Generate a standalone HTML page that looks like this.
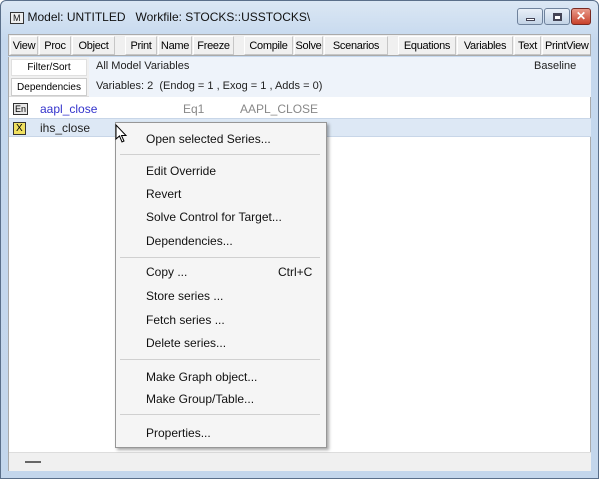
<!DOCTYPE html><html><head><style>
*{margin:0;padding:0;box-sizing:border-box}
body{width:599px;height:479px;overflow:hidden;background:#fff;font-family:"Liberation Sans",sans-serif;position:relative}
.win{position:absolute;left:0;top:0;width:599px;height:479px;background:linear-gradient(#dbe7f4,#c5d8ee 40px,#c3d6ec);border:1px solid #5a6f8a;border-radius:6px 6px 0 0}
.a{position:absolute}
.title{left:10px;top:10px;font-size:12px;color:#111}
.mi{display:inline-block;border:1px solid #333;font-size:9px;line-height:10px;padding:0 2px;background:#eee;margin-right:4px}
.tb{left:8px;top:34px;height:22px;width:583px;background:#f0f0f0;border:1px solid #aaa;font-size:11px;white-space:nowrap;overflow:hidden}
.tb span{position:absolute;top:1px;border:1px solid #c6c6c6;border-top-color:#fff;border-left-color:#fff;height:19px;line-height:18px;text-align:center;background:#f0f0f0;letter-spacing:-0.3px}
.client{left:8px;top:57px;width:583px;height:414px;background:#fff;border:1px solid #aaa}
.menu{left:115px;top:122px;width:212px;height:326px;background:#f5f5f5;border:1px solid #979797;box-shadow:2px 2px 3px rgba(0,0,0,.35);font-size:12px;color:#111}
.menu div{position:absolute;left:30px}
.sep{left:4px!important;width:200px;height:1px;background:#d0d0d0}
</style></head><body>
<div class="win"></div>
<div class="a title"><span class="mi">M</span>Model: UNTITLED &nbsp;&nbsp;Workfile: STOCKS::USSTOCKS\</div>
<div class="a" style="left:517px;top:8px;width:26px;height:17px;border:1px solid #6f829c;border-radius:3px;background:linear-gradient(#e9f0f8,#c3d3e6)"><div class="a" style="left:8px;top:9px;width:9px;height:3px;background:#fff;border:1px solid #445"></div></div>
<div class="a" style="left:544px;top:8px;width:26px;height:17px;border:1px solid #6f829c;border-radius:3px;background:linear-gradient(#e9f0f8,#c3d3e6)"><div class="a" style="left:8px;top:4px;width:9px;height:8px;border:2px solid #445;border-top-width:3px;background:#fff"></div></div>
<div class="a" style="left:571px;top:8px;width:20px;height:17px;border:1px solid #7a2a22;border-radius:3px;background:linear-gradient(#e99b8b,#c8412b);color:#fff;font-weight:bold;font-size:12px;text-align:center;line-height:15px">✕</div>
<div class="a tb">
<span style="left:1px;width:28px">View</span><span style="left:30px;width:32px">Proc</span><span style="left:63px;width:43px">Object</span>
<span style="left:116px;width:32px">Print</span><span style="left:149px;width:34px">Name</span><span style="left:184px;width:41px">Freeze</span>
<span style="left:235px;width:49px">Compile</span><span style="left:285px;width:29px">Solve</span><span style="left:315px;width:64px">Scenarios</span>
<span style="left:389px;width:58px">Equations</span><span style="left:448px;width:56px">Variables</span><span style="left:505px;width:27px">Text</span><span style="left:533px;width:56px;text-align:left;padding-left:2px">PrintView</span></div>
<div class="a client"></div>
<div class="a" style="left:9px;top:57px;width:582px;height:40px;background:#f0f0f0;border-bottom:1px solid #ddd"></div>
<div class="a" style="left:11px;top:59px;width:76px;height:17px;background:#fff;border:1px solid #e0e0e0;font-size:10px;text-align:center;line-height:16px">Filter/Sort</div>
<div class="a" style="left:11px;top:78px;width:76px;height:18px;background:#fff;border:1px solid #ccc;font-size:10px;text-align:center;line-height:18px">Dependencies</div>
<div class="a" style="left:89px;top:57px;width:502px;height:40px;background:#eef3fa"></div>
<div class="a" style="left:96px;top:60px;font-size:11px;color:#222">All Model Variables</div>
<div class="a" style="left:534px;top:60px;font-size:11px;color:#222">Baseline</div>
<div class="a" style="left:96px;top:80px;font-size:11px;color:#222">Variables: 2 &nbsp;(Endog = 1 , Exog = 1 , Adds = 0)</div>
<div class="a" style="left:9px;top:118px;width:582px;height:19px;background:#dde8f5;border-top:1px solid #c8d6e8;border-bottom:1px solid #c8d6e8"></div>
<div class="a" style="left:13px;top:103px;font-size:9px;border:1px solid #333;background:#e8e8e8;padding:0 1px;line-height:10px">En</div>
<div class="a" style="left:40px;top:102px;font-size:12px;color:#3333cc">aapl_close</div>
<div class="a" style="left:183px;top:102px;font-size:12px;color:#888">Eq1</div>
<div class="a" style="left:240px;top:102px;font-size:12px;color:#888">AAPL_CLOSE</div>
<div class="a" style="left:13px;top:122px;font-size:10px;border:1px solid #333;background:#f0e060;padding:0 2px;line-height:11px">X</div>
<div class="a" style="left:40px;top:121px;font-size:12px;color:#222">ihs_close</div>
<div class="a" style="left:9px;top:452px;width:582px;height:19px;background:#f0f0f0;border-top:1px solid #ddd"></div>
<div class="a" style="left:25px;top:461px;width:16px;height:2px;background:#666"></div>
<div class="a menu">
<div style="top:9px">Open selected Series...</div>
<div class="sep" style="top:31px"></div>
<div style="top:41px">Edit Override</div>
<div style="top:64px">Revert</div>
<div style="top:87px">Solve Control for Target...</div>
<div style="top:111px">Dependencies...</div>
<div class="sep" style="top:134px"></div>
<div style="top:142px">Copy ...</div><div style="top:142px;left:162px">Ctrl+C</div>
<div style="top:166px">Store series ...</div>
<div style="top:190px">Fetch series ...</div>
<div style="top:213px">Delete series...</div>
<div class="sep" style="top:236px"></div>
<div style="top:247px">Make Graph object...</div>
<div style="top:269px">Make Group/Table...</div>
<div class="sep" style="top:291px"></div>
<div style="top:303px">Properties...</div>
</div>
<svg class="a" style="left:115px;top:124px" width="14" height="20"><path d="M1 1 L1 15 L4.5 12 L7 18 L9 17 L6.5 11.5 L11 11.5 Z" fill="#fff" stroke="#000" stroke-width="1"/></svg>
</body></html>
